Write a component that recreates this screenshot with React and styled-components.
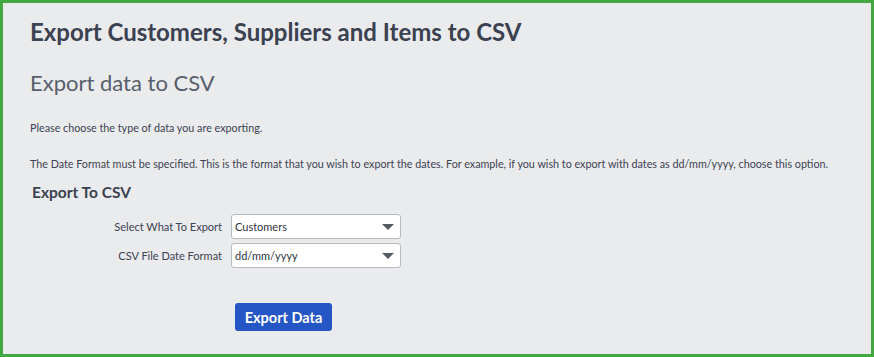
import React from "react";
import styled, { createGlobalStyle } from "styled-components";

const GlobalStyle = createGlobalStyle`
  html, body {
    margin: 0;
    padding: 0;
    background: #ffffff;
  }
  * {
    box-sizing: border-box;
  }
`;

const Frame = styled.div`
  width: 874px;
  height: 357px;
  border: 3px solid #43a843;
  background: #eaebed;
  font-family: Lato, "Liberation Sans", sans-serif;
  color: #3b4252;
  padding: 14px 27px 0;
`;

const PageTitle = styled.h1`
  margin: 0;
  font-size: 24px;
  font-weight: 700;
  color: #3a4150;
  line-height: 30px;
`;

const SubTitle = styled.h2`
  margin: 21px 0 0;
  font-size: 22px;
  font-weight: 400;
  color: #575e6b;
  line-height: 30px;
`;

const Note = styled.p`
  margin: ${(p) => (p.first ? "22px" : "20px")} 0 0;
  font-size: 10.75px;
  line-height: 16px;
  white-space: nowrap;
  color: #3b4252;
`;

const SectionTitle = styled.h3`
  margin: 10px 0 0 2px;
  font-size: 15.5px;
  font-weight: 700;
  color: #3a4150;
  line-height: 20px;
`;

const Form = styled.div`
  display: grid;
  grid-template-columns: 192px 170px;
  row-gap: 4px;
  column-gap: 9px;
  margin-top: 12px;
  align-items: center;
`;

const Label = styled.label`
  font-size: 11px;
  color: #3b4252;
  text-align: right;
`;

const SelectBox = styled.div`
  position: relative;
  height: 25px;
  background: #ffffff;
  border: 1px solid #b8bac2;
  border-radius: 3px;
  font-size: 11px;
  color: #2f3440;
  display: flex;
  align-items: center;
  padding-left: 3px;
`;

const Caret = styled.span`
  position: absolute;
  right: 6px;
  top: 9px;
  width: 0;
  height: 0;
  border-left: 6px solid transparent;
  border-right: 6px solid transparent;
  border-top: 6px solid #555a63;
`;

const ButtonRow = styled.div`
  padding-left: 205px;
  margin-top: 35px;
`;

const Button = styled.button`
  height: 28px;
  width: 97px;
  background: #2457c5;
  border: none;
  border-radius: 3px;
  color: #ffffff;
  font-family: Lato, "Liberation Sans", sans-serif;
  font-weight: 700;
  font-size: 14.5px;
  padding: 0;
  cursor: pointer;
`;

const fields = [
  { label: "Select What To Export", value: "Customers" },
  { label: "CSV File Date Format", value: "dd/mm/yyyy" },
];

export default function App() {
  return (
    <>
      <GlobalStyle />
      <Frame>
        <PageTitle>Export Customers, Suppliers and Items to CSV</PageTitle>
        <SubTitle>Export data to CSV</SubTitle>
        <Note first>Please choose the type of data you are exporting.</Note>
        <Note>
          The Date Format must be specified. This is the format that you wish
          to export the dates. For example, if you wish to export with dates as
          dd/mm/yyyy, choose this option.
        </Note>
        <SectionTitle>Export To CSV</SectionTitle>
        <Form>
          {fields.map((f) => (
            <React.Fragment key={f.label}>
              <Label>{f.label}</Label>
              <SelectBox>
                {f.value}
                <Caret />
              </SelectBox>
            </React.Fragment>
          ))}
        </Form>
        <ButtonRow>
          <Button>Export Data</Button>
        </ButtonRow>
      </Frame>
    </>
  );
}
